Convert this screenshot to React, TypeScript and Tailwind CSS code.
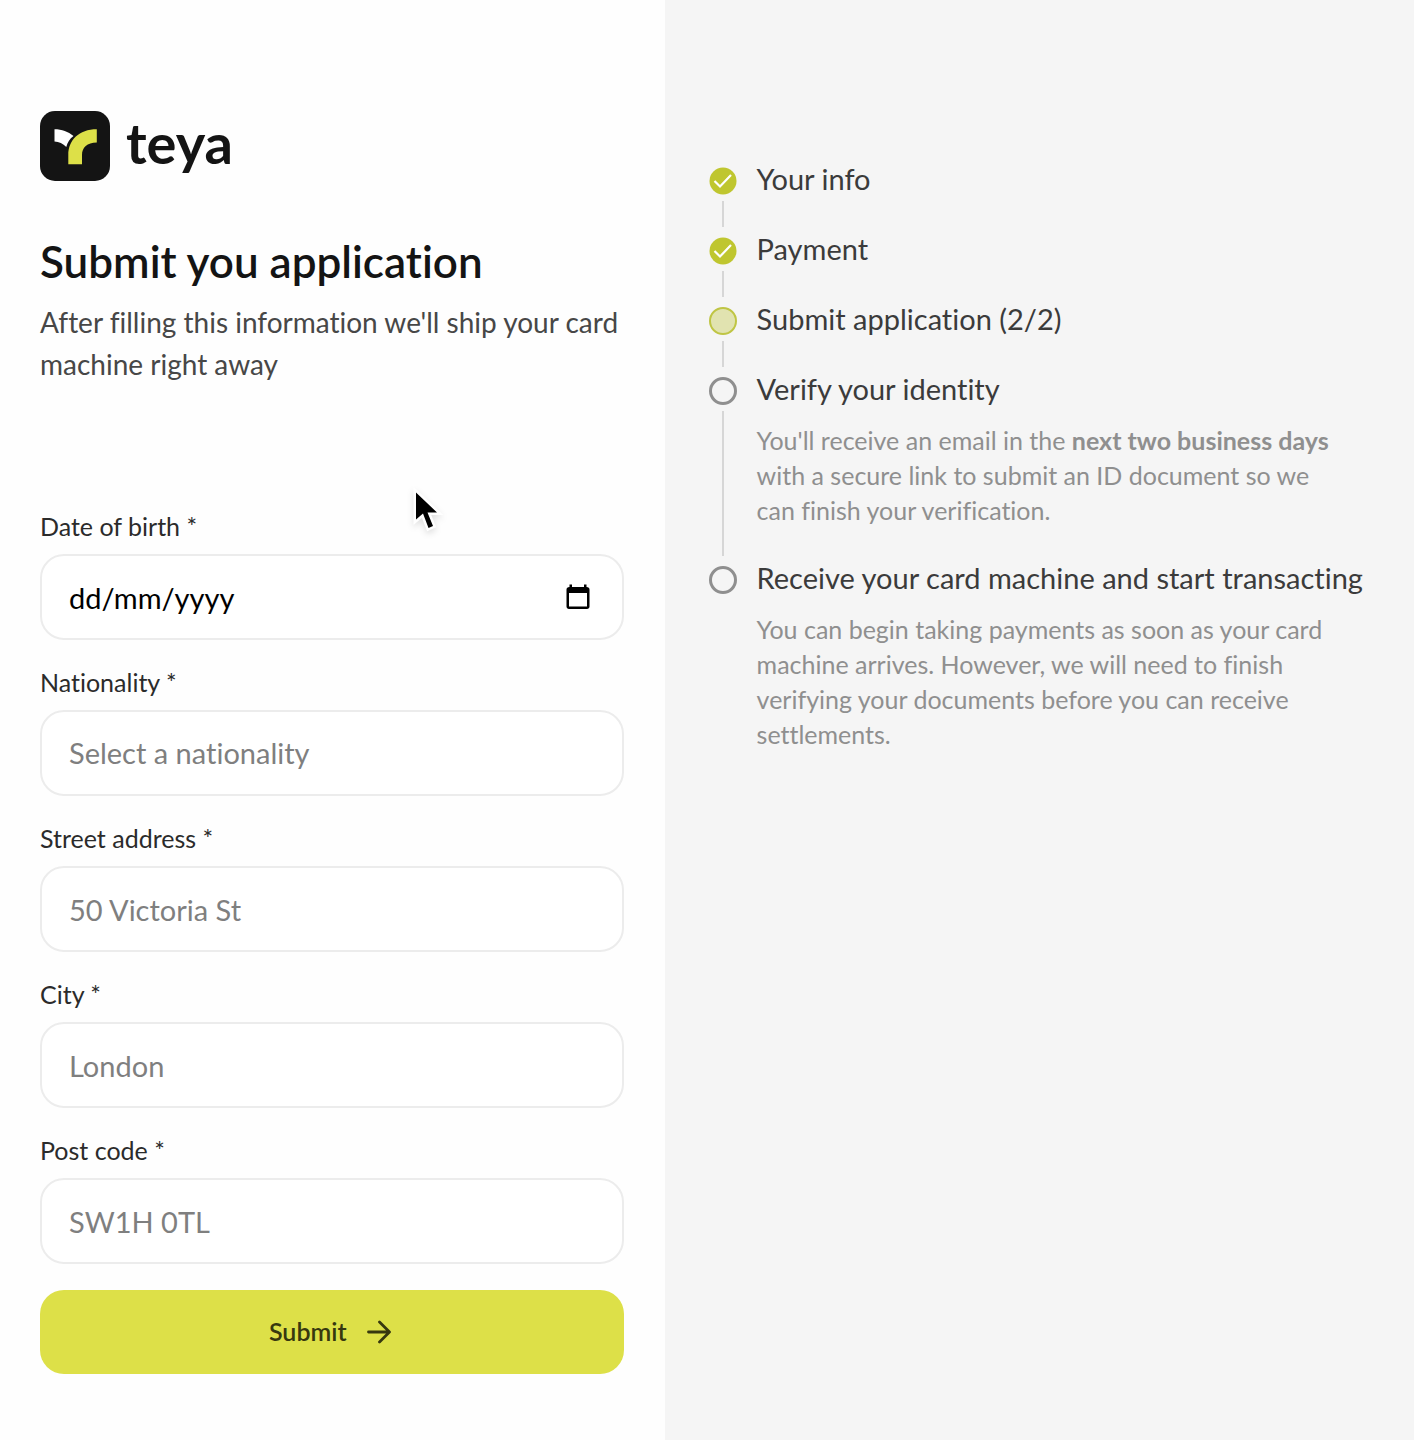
import { useState, type ReactNode } from "react";

type StepState = "done" | "current" | "todo";

type Step = {
  title: string;
  state: StepState;
  description?: ReactNode;
};

const STEPS: Step[] = [
  { title: "Your info", state: "done" },
  { title: "Payment", state: "done" },
  { title: "Submit application (2/2)", state: "current" },
  {
    title: "Verify your identity",
    state: "todo",
    description: (
      <>
        You'll receive an email in the <b className="font-bold">next two business days</b>{" "}
        <br />
        with a secure link to submit an ID document so we <br />
        can finish your verification.
      </>
    ),
  },
  {
    title: "Receive your card machine and start transacting",
    state: "todo",
    description: (
      <>
        You can begin taking payments as soon as your card <br />
        machine arrives. However, we will need to finish <br />
        verifying your documents before you can receive <br />
        settlements.
      </>
    ),
  },
];

const NATIONALITIES = ["British", "Irish", "Portuguese", "Spanish"];

const inputClass =
  "h-[86px] w-full rounded-3xl border-2 border-[#ececec] bg-white px-[27px] text-[29px] outline-none focus:border-[#dde048]";

function Logo() {
  return (
    <div className="flex items-start gap-4">
      <svg viewBox="0 0 70 70" className="size-[70px]" aria-hidden="true">
        <rect width="70" height="70" rx="15" fill="#141414" />
        <path d="M14.500 18.200C22 18.200 28 20.500 33.500 25C29.500 28 27.500 31.500 26.300 36C23 32.500 19 30.700 14.500 30.500Z" fill="#fff" />
        <path d="M56.800 18.200V31.500C47 31.500 42 36.500 42 44V53.200H28.300V44C28.300 29 39 18.200 56.800 18.200Z" fill="#dde048" />
      </svg>
      <span className="text-[56px] leading-[64px] font-bold text-[#141414]">teya</span>
    </div>
  );
}

function Field({ id, label, children }: { id: string; label: string; children: ReactNode }) {
  return (
    <div className="flex flex-col gap-3">
      <label htmlFor={id} className="text-[25px] leading-8 text-[#2b2b2b]">
        {label} *
      </label>
      {children}
    </div>
  );
}

function TextField({ id, label, placeholder }: { id: string; label: string; placeholder: string }) {
  return (
    <Field id={id} label={label}>
      <input
        id={id}
        type="text"
        placeholder={placeholder}
        className={`${inputClass} text-black placeholder:text-[#7f7f7f]`}
      />
    </Field>
  );
}

function StepMarker({ state }: { state: StepState }) {
  if (state === "done") {
    return (
      <svg viewBox="0 0 28 28" className="size-7" aria-hidden="true">
        <circle cx="14" cy="14" r="13.500" fill="#bfc62f" />
        <path d="M5.500 14L11 19.500L22 8" fill="none" stroke="#fff" strokeWidth="2.200" />
      </svg>
    );
  }
  if (state === "current") {
    return <span className="size-7 rounded-full border-2 border-[#bfc544] bg-[#e1e3b0]" />;
  }
  return <span className="size-7 rounded-full border-3 border-[#8f8f8f]" />;
}

function StepItem({ step, last }: { step: Step; last: boolean }) {
  return (
    <li className="flex gap-5">
      <div className="flex flex-col items-center">
        <div className="flex h-[42px] items-center pt-0.5">
          <StepMarker state={step.state} />
        </div>
        {!last && <div className="mb-0.5 w-0.5 flex-1 bg-[#d6d6d6]" />}
      </div>
      <div className="pb-[30px]">
        <h2 className="text-[29px] leading-10 text-[#3b3b3b]">{step.title}</h2>
        {step.description && (
          <p className="mt-3.5 text-[25px] leading-[35px] text-[#8f8f8f]">{step.description}</p>
        )}
      </div>
    </li>
  );
}

function Cursor() {
  return (
    <svg
      viewBox="0 0 32 52"
      className="pointer-events-none absolute top-[484px] left-[410px] h-[52px] w-8 overflow-visible drop-shadow-md"
      aria-hidden="true"
    >
      <path
        d="M6 8.500V35.500L13 29.500L18.500 44L23 42L17.500 28.500H27Z"
        fill="#000"
        stroke="#fff"
        strokeWidth="5"
        paintOrder="stroke"
      />
    </svg>
  );
}

export default function App() {
  const [nationality, setNationality] = useState("");

  return (
    <div className="relative flex min-h-screen bg-[#fefefe] font-['Lato',sans-serif] [font-variant-ligatures:none]">
      <main className="w-[47%] pt-[111px] pr-[41px] pb-16 pl-10">
        <Logo />
        <h1 className="mt-14 text-[44px] leading-[48px] font-semibold text-[#141414]">Submit you application</h1>
        <p className="mt-4 text-[28px] leading-[42px] text-[#474747]">
          After filling this information we'll ship your card machine right away
        </p>

        <form className="mt-[125px] flex flex-col gap-[26px]" onSubmit={(e) => e.preventDefault()}>
          <Field id="dob" label="Date of birth">
            <div className="relative">
              <input
                id="dob"
                type="text"
                placeholder="dd/mm/yyyy"
                className={`${inputClass} text-black placeholder:text-black`}
              />
              <button
                type="button"
                aria-label="Open calendar"
                className="absolute inset-y-0 right-8 flex items-center"
              >
                <svg viewBox="0 0 28 28" className="size-7" aria-hidden="true">
                  <path
                    d="M5.500 1.500H8V4H20V1.500H22.500V4C24.500 4 25.500 5 25.500 6.500V23.500C25.500 25 24.500 26 23 26H5C3.500 26 2.500 25 2.500 23.500V6.500C2.500 5 3.500 4 5.500 4ZM5 10V23.500H23V10Z"
                    fillRule="evenodd"
                  />
                </svg>
              </button>
            </div>
          </Field>
          <Field id="nationality" label="Nationality">
            <select
              id="nationality"
              value={nationality}
              onChange={(e) => setNationality(e.target.value)}
              className={`${inputClass} appearance-none ${nationality ? "text-black" : "text-[#7f7f7f]"}`}
            >
              <option value="">Select a nationality</option>
              {NATIONALITIES.map((name) => (
                <option key={name}>{name}</option>
              ))}
            </select>
          </Field>
          <TextField id="street" label="Street address" placeholder="50 Victoria St" />
          <TextField id="city" label="City" placeholder="London" />
          <TextField id="postcode" label="Post code" placeholder="SW1H 0TL" />
          <button
            type="submit"
            className="flex h-[84px] items-center justify-center gap-5 rounded-3xl bg-[#dde048] pr-1 text-[25px] font-semibold text-[#37380f]"
          >
            Submit
            <svg viewBox="0 0 24 24" className="size-6" fill="none" stroke="currentColor" strokeWidth="2.800" aria-hidden="true">
              <path d="M1.500 12H22M12.500 2L22.500 12L12.500 22" strokeLinecap="round" strokeLinejoin="round" />
            </svg>
          </button>
        </form>
      </main>

      <aside className="flex-1 bg-[#f5f5f5] pt-[159px] pl-11">
        <ol>
          {STEPS.map((step, i) => (
            <StepItem key={step.title} step={step} last={i === STEPS.length - 1} />
          ))}
        </ol>
      </aside>

      <Cursor />
    </div>
  );
}
